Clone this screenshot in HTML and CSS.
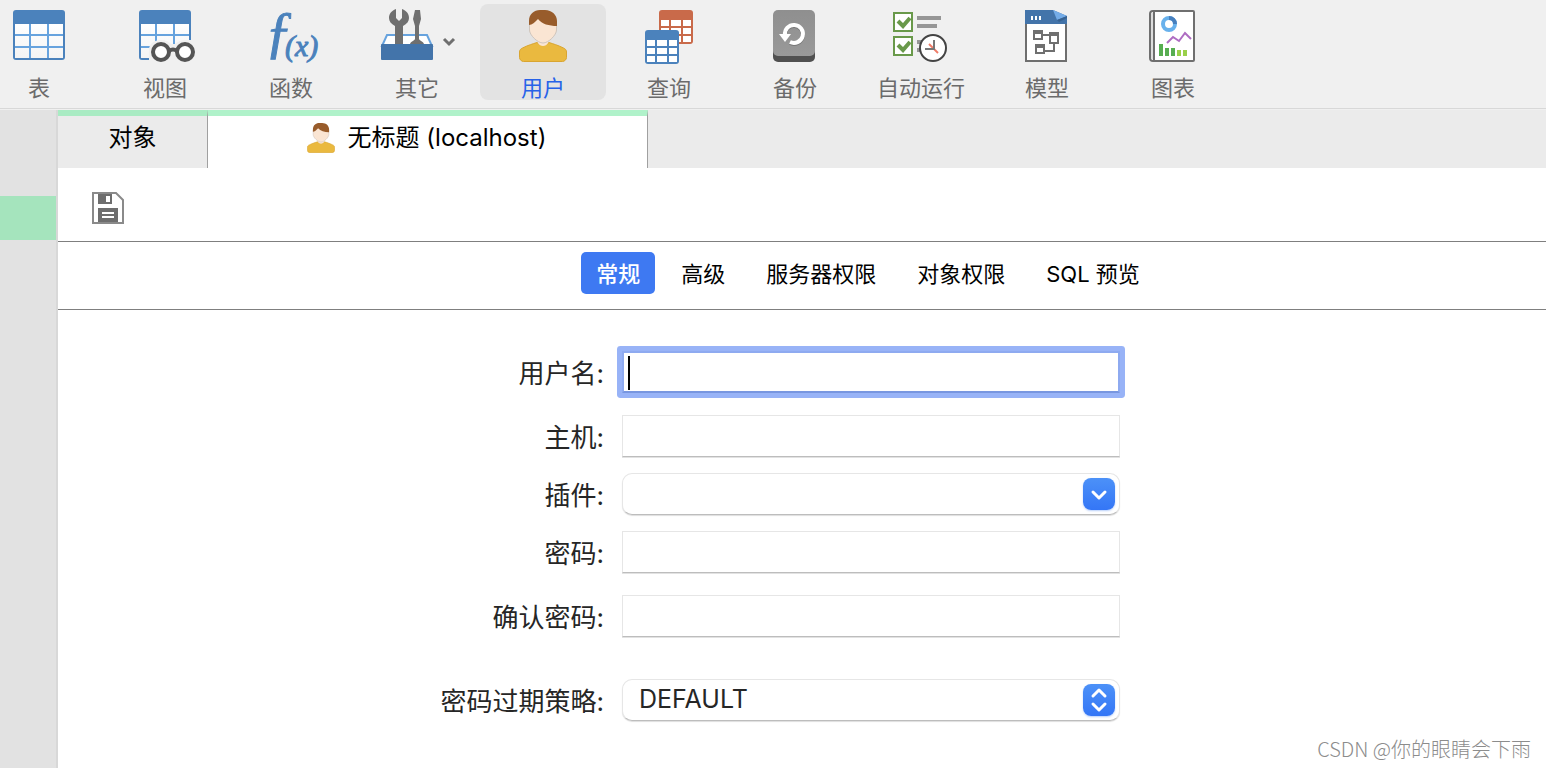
FILE: index.html
```html
<!DOCTYPE html>
<html lang="zh-CN">
<head>
<meta charset="utf-8">
<title>无标题 (localhost)</title>
<link rel="stylesheet" href="styles.css">
</head>
<body>
<svg class="defs" aria-hidden="true">
  <defs>
    <linearGradient id="cell" x1="0" y1="0" x2="0" y2="1"><stop offset="0" stop-color="#fff"/><stop offset="1" stop-color="#f4f4f4"/></linearGradient>
    <linearGradient id="key" x1="0" y1="0" x2="0" y2="1"><stop offset="0" stop-color="#8f8f8f"/><stop offset="1" stop-color="#999"/></linearGradient>
  </defs>
  <symbol id="grid-large" viewBox="0 0 52 50">
    <rect width="52" height="50" rx="3" fill="#4b82bc"/>
    <path fill="#67a3de" d="M2 14h48v34H2z"/>
    <path fill="url(#cell)" d="M2 14h14v10H2zM18 14h16v10H18zM36 14h14v10H36zM2 26h14v10H2zM18 26h16v10H18zM36 26h14v10H36zM2 38h14v10H2zM18 38h16v10H18zM36 38h14v10H36z"/>
  </symbol>
  <symbol id="grid-small" viewBox="0 0 34 34">
    <rect width="34" height="34" rx="3" fill="currentColor"/>
    <path fill="#fff" d="M2 10h8v6H2zM12 10h10v6H12zM24 10h8v6H24zM2 18h8v6H2zM12 18h10v6H12zM24 18h8v6H24zM2 26h8v6H2zM12 26h10v6H12zM24 26h8v6H24z"/>
  </symbol>
  <symbol id="person" viewBox="8 2 48 52">
    <path fill="#eab93f" stroke="#d9a531" d="M8.500 49.500V44c0-2 1-3 3-4 6-3 10-4 14.500-5.500 3 3 9 3 12 0 4.500 1.500 8.500 2.500 14.500 5.500 2 1 3 2 3 4v5.500c0 2-2 4-4 4H12.500c-2 0-4-2-4-4z"/>
    <path fill="#fae5d3" d="M27 30h10v5c-2 4-8 4-10 0z"/>
    <path fill="#fae5d3" stroke="#cfc5bc" d="M18.500 14v8c0 5 8 13 13.500 13s13.500-8 13.500-13v-8l-18-6z"/>
    <path fill="#985c2b" d="M18 17v-4C18 6 23 2 29 2h5c7 0 12 5 12 11v5c-8 0-15-2-19-7-3 3-6 6-9 6z"/>
  </symbol>
</svg>

<nav class="toolbar" aria-label="主工具栏">
  <div class="toolbar-items">
    <button class="tool" type="button">
      <svg class="tool-icon" viewBox="0 0 64 56"><use href="#grid-large" x="6" y="2" width="52" height="50"/></svg>
      <span class="tool-label">表</span>
    </button>
    <button class="tool" type="button">
      <svg class="tool-icon" viewBox="0 0 64 56">
        <use href="#grid-large" x="6" y="2" width="52" height="50"/>
        <path fill="#f0f0f0" d="M16 54V42c0-6 5-10 12-10 5 0 8 2 10 4h4c2-2 6-4 10-4h8v22z"/>
        <g fill="#fff" stroke="#555" stroke-width="4"><circle cx="28" cy="44" r="8"/><circle cx="52" cy="44" r="8"/><path fill="none" d="M36 43q4-3 8 0"/></g>
      </svg>
      <span class="tool-label">视图</span>
    </button>
    <button class="tool" type="button">
      <svg class="tool-icon" viewBox="0 0 64 56"><text class="fx" x="6" y="43" font-size="56">ƒ</text><text class="fx" x="26" y="48" font-size="30">(x)</text></svg>
      <span class="tool-label">函数</span>
    </button>
    <button class="tool" type="button">
      <svg class="tool-icon tool-icon-wide" viewBox="0 0 80 56">
        <path fill="#fff" stroke="#67a3de" stroke-width="2" d="M5 38l5-11h40l5 11z"/>
        <path fill="#6f6f6f" d="M19 1v9l3 3 3-3V1c5 2 7 5 7 9 0 3-2 6-6 8v20h-8V18c-4-2-6-5-6-8 0-4 2-7 7-9z"/>
        <path fill="#6f6f6f" d="M38 2h5l1 9-2 7v13c1 2 4 2 5 5H33c1-3 4-3 5-5V18l-2-7z"/>
        <rect x="4" y="36" width="52" height="16" rx="1" fill="#4374aa"/>
        <path d="M67 31l5 5 5-5" fill="none" stroke="#6f6f6f" stroke-width="3"/>
      </svg>
      <span class="tool-label">其它</span>
    </button>
    <button class="tool is-selected" type="button" aria-pressed="true">
      <svg class="tool-icon" viewBox="0 0 64 56"><use href="#person" x="8" y="2" width="48" height="52"/></svg>
      <span class="tool-label">用户</span>
    </button>
    <button class="tool" type="button">
      <svg class="tool-icon" viewBox="0 0 64 56"><use class="red" href="#grid-small" x="22" y="2" width="34" height="34"/><use class="blue" href="#grid-small" x="8" y="22" width="34" height="34"/></svg>
      <span class="tool-label">查询</span>
    </button>
    <button class="tool" type="button">
      <svg class="tool-icon" viewBox="0 0 64 56">
        <rect x="10" y="6" width="42" height="48" rx="5" fill="#505050"/><rect x="10" y="2" width="42" height="46" rx="5" fill="url(#key)"/>
        <path d="M22 28a9 9 0 1 1 5 7" fill="none" stroke="#777" stroke-width="4"/>
        <path d="M22 27a9 9 0 1 1 5 7" fill="none" stroke="#fff" stroke-width="4"/><path fill="#fff" d="M16 26h12l-6 8z"/>
      </svg>
      <span class="tool-label">备份</span>
    </button>
    <button class="tool" type="button">
      <svg class="tool-icon" viewBox="0 0 64 56">
        <path fill="#fff" stroke="#69994a" stroke-width="2" d="M5 5h18v18H5zM5 29h18v18H5z"/>
        <path fill="none" stroke="#69994a" stroke-width="4" d="M9 13l5 5 7-8M9 37l5 5 7-8"/>
        <path fill="#969696" d="M28 8h24v4H28zM28 16h20v4H28zM28 32h6v4h-6zM28 40h4v4h-4z"/>
        <circle cx="44" cy="40" r="13" fill="#fff" stroke="#444" stroke-width="2"/>
        <path fill="none" stroke="#ef7c68" stroke-width="2" d="M40 36l9 9"/><path fill="none" stroke="#777" stroke-width="2" d="M45 32v9h-9"/>
      </svg>
      <span class="tool-label">自动运行</span>
    </button>
    <button class="tool" type="button">
      <svg class="tool-icon" viewBox="0 0 64 56">
        <path fill="#fff" stroke="#6f6f6f" stroke-width="2" d="M11 10h40v43H11z"/>
        <path fill="#4374aa" d="M10 2h28l14 6v8H10z"/><path fill="#74ace8" d="M38 2l14 6-10 4z"/><path fill="#376291" d="M42 12l10-4v2l-8 4z"/>
        <path fill="#fff" d="M16 8h2v4h-2zM20 8h2v4h-2zM24 8h2v4h-2z"/>
        <path fill="none" stroke="#6f6f6f" stroke-width="2" d="M19 23h8v8h-8zM35 25h8v10h-8zM21 37h8v8h-8zM28 27h6M39 36v7h-9"/>
        <path fill="#6f6f6f" d="M18 22h10v4H18zM34 24h10v4H34zM20 36h10v4H20z"/>
      </svg>
      <span class="tool-label">模型</span>
    </button>
    <button class="tool" type="button">
      <svg class="tool-icon" viewBox="0 0 64 56">
        <path fill="#fff" stroke="#6f6f6f" stroke-width="2" d="M12 3h40q1 0 1 1v48q0 1-1 1H12q-3 0-3-3V6q0-3 3-3z"/>
        <path fill="#ddd" d="M10 5h2v46h-2z"/><path fill="#6f6f6f" d="M12 3h2v50h-2z"/>
        <circle cx="28" cy="16" r="6" fill="none" stroke="#68b1ec" stroke-width="4"/><path d="M28 10a6 6 0 0 1 6 6" fill="none" stroke="#477fbd" stroke-width="4"/>
        <path fill="none" stroke="#ae6cc2" stroke-width="2" d="M26 35l6-6 6 4 6-8 6 6"/>
        <path fill="#57ad51" d="M18 36h4v12h-4zM24 40h4v8h-4zM30 40h4v8h-4z"/><path fill="#9ad04a" d="M36 42h4v6h-4zM42 42h4v6h-4z"/>
      </svg>
      <span class="tool-label">图表</span>
    </button>
  </div>
</nav>

<div class="workspace">
  <aside class="sidebar" aria-label="连接"><div class="sidebar-selected"></div></aside>
  <main class="main">
    <div class="tabs" role="tablist">
      <button class="tab tab-objects" type="button" role="tab">对象</button>
      <button class="tab tab-user is-open" type="button" role="tab" aria-selected="true">
        <svg class="tab-icon"><use href="#person"/></svg><span class="tab-title">无标题 (localhost)</span>
      </button>
    </div>
    <div class="actions">
      <button class="save" type="button" aria-label="保存">
        <svg class="save-icon" viewBox="0 0 32 32">
          <path fill="#fff" stroke="#8a8a8a" stroke-width="2" d="M1 1h23l7 7v23H1z"/>
          <path fill="#6e6e6e" d="M6 2h14v10H6zM6 16h20v14H6z"/>
          <path fill="#fff" d="M14 4h4v6h-4zM10 20h12v2H10zM10 24h12v2H10z"/>
        </svg>
      </button>
    </div>
    <div class="sections" role="tablist">
      <button class="section is-active" type="button" role="tab" aria-selected="true">常规</button>
      <button class="section" type="button" role="tab">高级</button>
      <button class="section" type="button" role="tab">服务器权限</button>
      <button class="section" type="button" role="tab">对象权限</button>
      <button class="section" type="button" role="tab">SQL 预览</button>
    </div>
    <form class="form">
      <div class="row">
        <label class="label" for="username">用户名:</label>
        <div class="control"><input class="field is-focused" id="username" type="text"><span class="caret"></span></div>
      </div>
      <div class="row row-spaced">
        <label class="label" for="host">主机:</label>
        <div class="control"><input class="field" id="host" type="text"></div>
      </div>
      <div class="row">
        <label class="label" for="plugin">插件:</label>
        <div class="control">
          <input class="field field-round" id="plugin" type="text">
          <button class="knob" type="button" aria-label="展开"><svg class="knob-icon" viewBox="0 0 32 32"><path d="M10 14l6 6 6-6"/></svg></button>
        </div>
      </div>
      <div class="row">
        <label class="label" for="password">密码:</label>
        <div class="control"><input class="field" id="password" type="password"></div>
      </div>
      <div class="row row-spaced">
        <label class="label" for="confirm">确认密码:</label>
        <div class="control"><input class="field" id="confirm" type="password"></div>
      </div>
      <div class="row row-group">
        <label class="label" for="policy">密码过期策略:</label>
        <div class="control">
          <select class="field field-round" id="policy"><option>DEFAULT</option></select>
          <span class="knob"><svg class="knob-icon" viewBox="0 0 32 32"><path d="M10 12l6-6 6 6M10 20l6 6 6-6"/></svg></span>
        </div>
      </div>
    </form>
  </main>
</div>
<div class="watermark">CSDN @你的眼睛会下雨</div>
</body>
</html>
```
FILE: styles.css
```css
* { box-sizing: border-box; }

body {
  margin: 0;
  min-height: 100vh;
  display: flex;
  flex-direction: column;
  position: relative;
  overflow-x: hidden;
  background: #f0f0f0;
  color: #000;
  font-family: Inter, "Noto Sans CJK SC", sans-serif;
}

button, input, select {
  margin: 0;
  padding: 0;
  border: 0;
  background: none;
  color: inherit;
  font: inherit;
}

svg { display: block; }
.defs { position: absolute; width: 0; height: 0; }

/* Main toolbar */
.toolbar {
  padding: 4px 0 8px;
  border-bottom: 1px solid #d8d8d8;
  margin-bottom: 1px;
  overflow: hidden;
}
.toolbar-items { display: flex; margin-left: -24px; }
.tool {
  flex: 0 0 126px;
  display: flex;
  flex-direction: column;
  align-items: center;
  gap: 12px;
  padding-top: 4px;
  border-radius: 8px;
  color: #6b6b6b;
}
.tool.is-selected { background: #e3e3e3; color: #2762e8; }
.tool-icon { width: 64px; height: 56px; overflow: visible; }
.tool-icon-wide { width: 80px; }
.tool-label { font-size: 22px; line-height: 24px; }
.fx {
  font-family: "Liberation Serif", serif;
  font-style: italic;
  fill: #4b82bc;
  stroke: #4b82bc;
  stroke-width: 1px;
}
.red { color: #c96a4a; }
.blue { color: #4b82bc; }

/* Workspace */
.workspace { flex: 1; display: flex; }
.sidebar {
  flex: 0 0 58px;
  padding-top: 86px;
  background: #e2e2e2;
  border-right: 2px solid #d8d8d8;
}
.sidebar-selected { height: 44px; background: #a5e4bd; }
.main { flex: 1; min-width: 0; background: #fff; }

.tabs { display: flex; background: #ebebeb; }
.tab {
  height: 58px;
  display: flex;
  align-items: center;
  justify-content: center;
  gap: 13px;
  border-top: 6px solid #a9ebc3;
  border-right: 1px solid #a0a0a0;
  padding-bottom: 14px;
  font-size: 24px;
}
.tab-objects { width: 150px; }
.tab-user { width: 440px; padding-right: 2px; }
.tab.is-open { background: #fff; border-top-color: #b0f2ca; }
.tab-icon { width: 28px; height: 30px; margin-top: 6px; }

.actions { padding: 24px 34px 17px; border-bottom: 1px solid #7f7f7f; }
.save { display: block; }
.save-icon { width: 32px; height: 32px; }

.sections {
  display: flex;
  justify-content: center;
  gap: 11px;
  padding: 10px 0 15px 132px;
  border-bottom: 1px solid #7f7f7f;
}
.section {
  height: 42px;
  padding: 0 15px 2px;
  border-radius: 5px;
  font-size: 22px;
  white-space: nowrap;
}
.section.is-active { background: #3e79f2; color: #fff; font-weight: 500; }

/* Form */
.form {
  display: flex;
  flex-direction: column;
  align-items: center;
  gap: 16px;
  padding: 41px 46px 46px 0;
  color: #262626;
  font-size: 26px;
}
.row {
  display: grid;
  grid-template-columns: 168px minmax(0, 498px);
  column-gap: 16px;
  align-items: center;
}
.row-spaced { margin-top: 6px; }
.row-group { margin-top: 26px; }
.label { text-align: right; white-space: nowrap; line-height: 36px; padding: 4px 2px 0 0; }
.control { position: relative; width: 498px; max-width: 100%; }
.field {
  display: block;
  width: 100%;
  height: 42px;
  padding: 0 16px 2px;
  border: 1px solid #e6e6e6;
  border-bottom-color: #bdbdbd;
  background: #fff;
  box-shadow: 0 1px 0 #e2e2e2;
  outline: 0;
  appearance: none;
  font-size: 25px;
}
.field.is-focused {
  border: 2px solid #8eaaf0;
  border-bottom-color: #7896e0;
  border-radius: 1px;
  box-shadow: 0 0 0 5px #98b3f7;
}
.field-round { border-radius: 10px; box-shadow: 0 1px 1px #dedede; }
.caret {
  position: absolute;
  left: 6px;
  top: 5px;
  width: 2px;
  height: 34px;
  background: #000;
}
.knob {
  position: absolute;
  top: 5px;
  right: 5px;
  width: 32px;
  height: 32px;
  border-radius: 8px;
  background: linear-gradient(#4c91f8, #3476f6);
  box-shadow: 0 1px 2px #b9d0fa;
}
span.knob { pointer-events: none; }
.knob-icon {
  width: 32px;
  height: 32px;
  fill: none;
  stroke: #fff;
  stroke-width: 3;
  stroke-linecap: round;
  stroke-linejoin: round;
}

.watermark {
  position: absolute;
  right: 15px;
  bottom: 4px;
  color: #8c8c8c;
  font-family: "Noto Sans CJK SC", sans-serif;
  font-size: 20px;
  font-weight: 300;
  line-height: 30px;
}
```
